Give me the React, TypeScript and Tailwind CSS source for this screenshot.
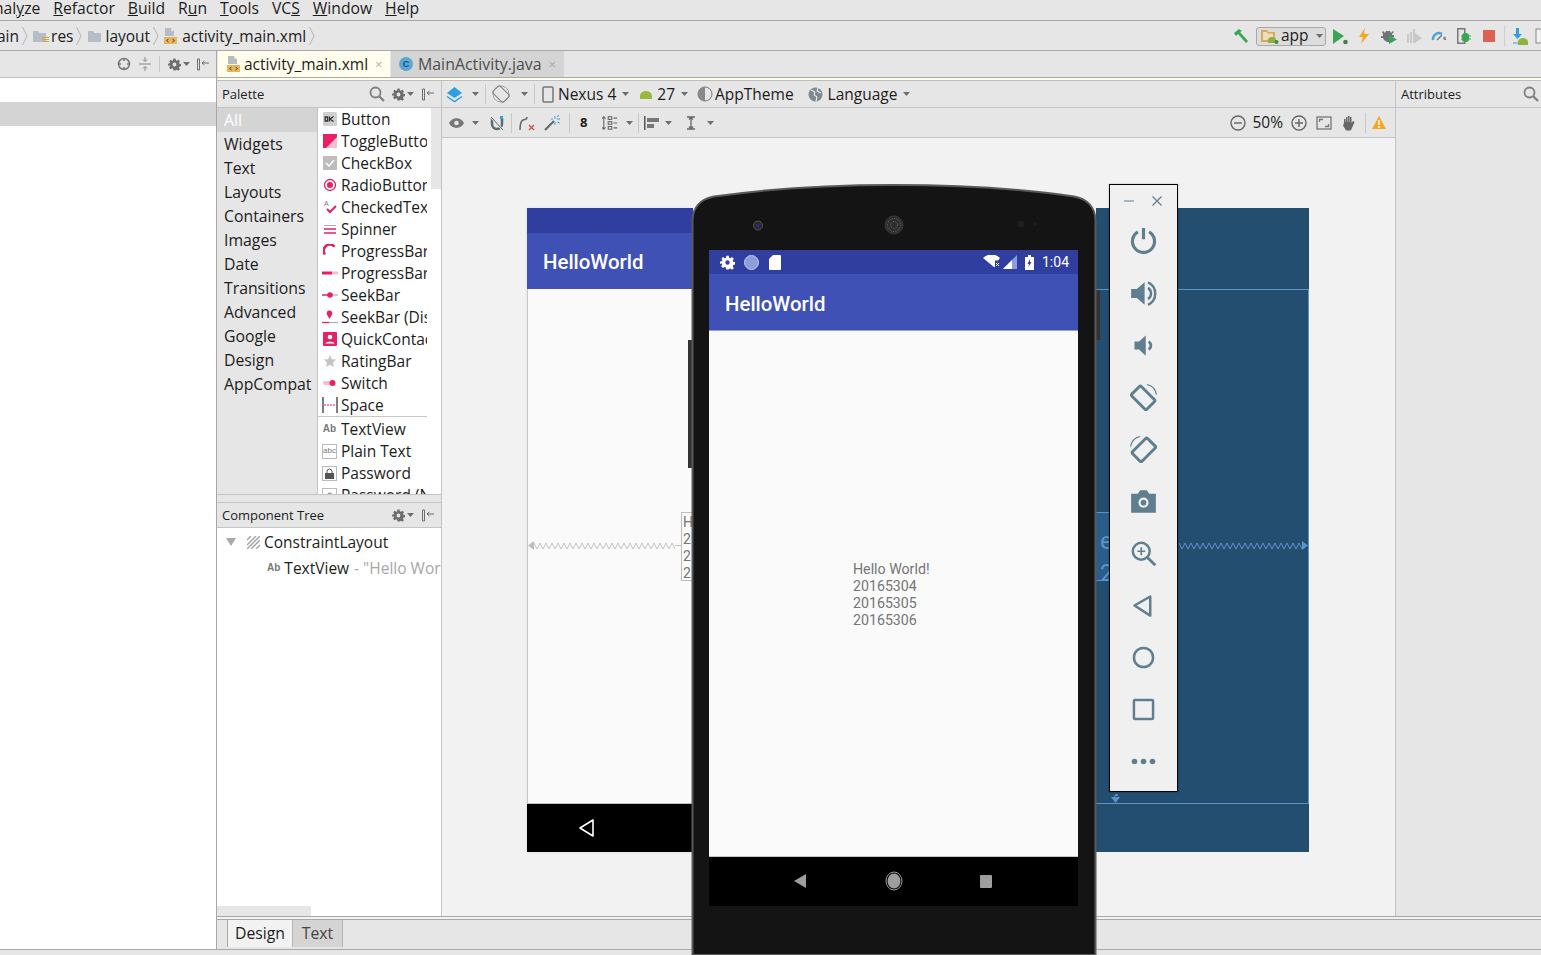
import React from 'react';

const Gear = () => (
  <span className="flex items-center">
    <svg width="13" height="13" viewBox="0 0 24 24" fill="#6e6e6e">
      <path fillRule="evenodd" d="M10 1h4l.6 3.2 2 .8L19.300 3.200l2.800 2.800-1.800 2.700.8 2 3.100.6v4l-3.100.6-.8 2 1.800 2.700-2.800 2.800-2.700-1.800-2 .8L14 23h-4l-.6-3.200-2-.8-2.700 1.800-2.800-2.800 1.800-2.700-.8-2L0 14.500v-4l3.100-.6.8-2L2.100 6l2.800-2.800L7.600 5l2-.8zM12 8.500a3.500 3.500 0 1 0 0 7 3.500 3.500 0 0 0 0-7z" />
    </svg>
    <Caret />
  </span>
);

const Caret = () => (
  <svg width="7" height="4" viewBox="0 0 7 4" className="ml-[2px]"><path d="M0 0h7L3.500 4z" fill="#6e6e6e" /></svg>
);

const PinLeft = () => (
  <svg width="13" height="13" viewBox="0 0 13 13" fill="none" stroke="#6e6e6e">
    <path d="M1.500 1v11M1.500 1h2v11h-2" />
    <path d="M6 5h7M6 5l2.500-2M6 5l2.500 2" />
  </svg>
);

const Search = () => (
  <svg width="16" height="16" viewBox="0 0 16 16" fill="none" stroke="#7f7f7f" strokeWidth="1.800">
    <circle cx="6.500" cy="6.500" r="5" />
    <path d="M10 10l5 5" strokeWidth="2.200" />
  </svg>
);

const XmlFile = () => (
  <svg width="14" height="16" viewBox="0 0 14 16">
    <path d="M1 0h6l3 3v5H1z" fill="#b5bcc2" />
    <path d="M7 0v3h3z" fill="#e6e6e6" />
    <rect x="0" y="9" width="13" height="7" fill="#e8b45c" />
    <path d="M4.500 11l-2 1.500 2 1.500M8.500 11l2 1.500-2 1.500" stroke="#5a4a20" fill="none" />
  </svg>
);

const Chevron = () => (
  <svg width="6" height="20" viewBox="0 0 6 20" fill="none" stroke="#b4b4b4"><path d="M.5 1l4.500 9-4.500 9" /></svg>
);

const Folder = ({ lines }: { lines?: boolean }) => (
  <svg width="16" height="13" viewBox="0 0 16 13">
    <path d="M0 1h5l1.500 2H13v9H0z" fill="#b5bec6" />
    {lines && <path d="M9 7.500h7M9 9.500h7M9 11.500h7" stroke="#d9a441" />}
  </svg>
);

const Sep = ({ h = 18 }: { h?: number }) => <div className="w-px bg-[#c8c8c8] mx-[6px]" style={{ height: h }} />;

const menu: [string, string, string][] = [
  ['nal', 'y', 'ze'],
  ['', 'R', 'efactor'],
  ['', 'B', 'uild'],
  ['R', 'u', 'n'],
  ['', 'T', 'ools'],
  ['VC', 'S', ''],
  ['', 'W', 'indow'],
  ['', 'H', 'elp'],
];

const categories = ['All', 'Widgets', 'Text', 'Layouts', 'Containers', 'Images', 'Date', 'Transitions', 'Advanced', 'Google', 'Design', 'AppCompat'];

const pink = '#e91e63';

const paletteIcons: Record<string, React.ReactNode> = {
  ok: (
    <svg width="14" height="14" viewBox="0 0 14 14"><rect width="14" height="14" rx="1.500" fill="#cfcfcf" /><path d="M2.200 5h2.400v4H2.200zM6.500 4.500V9.500M10.500 4.500L7 7l3.500 2.500" fill="none" stroke="#333" strokeWidth="1.300" /></svg>
  ),
  toggle: (
    <svg width="14" height="14" viewBox="0 0 14 14"><rect width="14" height="14" fill={pink} /><path d="M14 3v11H3z" fill="#f8bbd0" /></svg>
  ),
  check: (
    <svg width="14" height="14" viewBox="0 0 14 14"><rect width="14" height="14" fill="#bdbdbd" /><path d="M3 7l3 3 5-6" fill="none" stroke="#fff" strokeWidth="1.500" /></svg>
  ),
  radio: (
    <svg width="14" height="14" viewBox="0 0 14 14"><circle cx="7" cy="7" r="5.500" fill="none" stroke={pink} strokeWidth="1.300" /><circle cx="7" cy="7" r="3" fill={pink} /></svg>
  ),
  checked: (
    <svg width="14" height="14" viewBox="0 0 14 14"><text x="1" y="6" fontSize="7" fill="#777" fontFamily="Liberation Sans">A</text><path d="M4 9l3 3 6-6" fill="none" stroke={pink} strokeWidth="2" /></svg>
  ),
  spinner: (
    <svg width="14" height="14" viewBox="0 0 14 14"><path d="M1 7h12M1 11h12" stroke={pink} strokeWidth="1.600" /><path d="M1 3.500h12" stroke="#aaa" /></svg>
  ),
  circle: (
    <svg width="14" height="14" viewBox="0 0 14 14"><path d="M11.500 2.800A6 6 0 1 0 2 10.500" fill="none" stroke={pink} strokeWidth="2.600" /></svg>
  ),
  bar: (
    <svg width="16" height="14" viewBox="0 0 16 14"><rect y="5.500" width="10" height="3" fill={pink} /><rect x="10" y="5.500" width="6" height="3" fill="#f8bbd0" /></svg>
  ),
  seek: (
    <svg width="16" height="14" viewBox="0 0 16 14"><path d="M0 7h16" stroke="#aaa" strokeWidth="1.200" /><path d="M0 7h7" stroke={pink} strokeWidth="1.200" /><circle cx="8" cy="7" r="2.800" fill={pink} /></svg>
  ),
  seekd: (
    <svg width="16" height="16" viewBox="0 0 16 16"><path d="M0 13.500h16" stroke="#aaa" strokeWidth="1.200" /><path d="M0 13.500h7" stroke={pink} strokeWidth="1.200" /><path d="M7.500 10L5 5.500a2.800 2.800 0 1 1 5 0z" fill={pink} /></svg>
  ),
  quick: (
    <svg width="14" height="14" viewBox="0 0 14 14"><rect width="14" height="14" rx="1" fill={pink} /><circle cx="7" cy="5" r="2.300" fill="#fff" /><path d="M2.500 11.500c0-2.500 9-2.500 9 0z" fill="#fff" /></svg>
  ),
  star: (
    <svg width="14" height="14" viewBox="0 0 14 14"><path d="M7 1l1.800 4.200 4.500.4-3.400 3 1 4.400L7 10.700 3.100 13l1-4.400-3.400-3 4.500-.4z" fill="#c4c4c4" /></svg>
  ),
  sw: (
    <svg width="14" height="14" viewBox="0 0 14 14"><rect y="5" width="12" height="4" rx="2" fill="#f8bbd0" /><circle cx="9.500" cy="7" r="3" fill={pink} /></svg>
  ),
  space: (
    <svg width="16" height="16" viewBox="0 0 16 16"><path d="M1 0v16M15 0v16" stroke="#555" strokeWidth="1.500" /><path d="M2 8h12" stroke={pink} strokeWidth="1.200" strokeDasharray="2 1" /></svg>
  ),
  ab: <span className="text-[10px] leading-none text-[#777] font-['Liberation_Sans'] font-bold">Ab</span>,
  abc: (
    <span className="flex w-[15px] h-[15px] items-center justify-center border border-[#bbb] text-[8px] leading-none text-[#777] font-['Liberation_Sans']">abc</span>
  ),
  lock: (
    <span className="flex w-[15px] h-[15px] items-center justify-center border border-[#bbb]">
      <svg width="9" height="11" viewBox="0 0 9 11"><path d="M2 5V3.500a2.500 2.500 0 0 1 5 0V5" fill="none" stroke="#555" /><rect y="5" width="9" height="6" fill="#555" /></svg>
    </span>
  ),
  num: (
    <span className="flex w-[15px] h-[15px] items-center justify-center border border-[#bbb] text-[8px] leading-none text-[#777] font-['Liberation_Sans']">#</span>
  ),
};

const widgets: [string, string][] = [
  ['ok', 'Button'],
  ['toggle', 'ToggleButton'],
  ['check', 'CheckBox'],
  ['radio', 'RadioButton'],
  ['checked', 'CheckedTextView'],
  ['spinner', 'Spinner'],
  ['circle', 'ProgressBar'],
  ['bar', 'ProgressBar (Horizontal)'],
  ['seek', 'SeekBar'],
  ['seekd', 'SeekBar (Discrete)'],
  ['quick', 'QuickContactBadge'],
  ['star', 'RatingBar'],
  ['sw', 'Switch'],
  ['space', 'Space'],
];

const textItems: [string, string][] = [
  ['ab', 'TextView'],
  ['abc', 'Plain Text'],
  ['lock', 'Password'],
  ['num', 'Password (Numeric)'],
];

const PaletteRow = ({ icon, label }: { icon: string; label: string }) => (
  <div className="flex h-[22px] items-center shrink-0">
    <div className="flex w-[23px] justify-center shrink-0">{paletteIcons[icon]}</div>
    <span className="block w-[86px] overflow-hidden whitespace-nowrap pt-[2px]">{label}</span>
  </div>
);

const TopIcons = () => (
  <div className="flex items-center -mr-[10px]">
    {/* hammer */}
    <svg width="16" height="16" viewBox="0 0 16 16" className="mr-[7px]"><path d="M1 5l5-4 3 2-2 1 8 9-2 2-8-9-2 2z" fill="#3aa655" /></svg>
    <div className="flex items-center w-[70px] h-[19px] rounded-[3px] border border-[#a8a8a8] bg-[#dcdcdc] pl-[4px]">
      <svg width="18" height="15" viewBox="0 0 18 15"><path d="M0 1h6l1.500 2H14v10H0z" fill="#d9a85f" /><path d="M2 3v8h10V4.500H7L5.500 3z" fill="#f1dcb7" /><path d="M7 14v-3a4 3 0 0 1 8 0v3z" fill="#8cb33f" /><circle cx="15.500" cy="13" r="2" fill="#3d8b46" /></svg>
      <span className="ml-[2px] leading-none">app</span>
      <span className="ml-[5px]"><Caret /></span>
    </div>
    <div className="flex w-[25px] justify-end pr-[2px]"><svg width="17" height="17" viewBox="0 0 17 17"><path d="M1 1l11 7-11 8z" fill="#3aa655" /><circle cx="13.500" cy="14" r="2.300" fill="#4a7a50" /></svg></div>
    <div className="flex w-[25px] justify-center"><svg width="10" height="16" viewBox="0 0 10 16"><path d="M6 0L0 9h4l-2 7 8-10H5z" fill="#f5a623" /></svg></div>
    <div className="flex w-[25px] justify-center"><svg width="16" height="16" viewBox="0 0 16 16"><path d="M2 3l2 2 1-2h4l1 2 2-2 1 1-2 2v1h2v2h-2l-1 3-2-1v3H6l-3-2-1-2H0V8h2V6L1 4z" fill="#6e7478" /><path d="M8 7l8 4.500L8 16z" fill="#3aa655" /></svg></div>
    <div className="flex w-[25px] justify-center"><svg width="16" height="16" viewBox="0 0 16 16"><path d="M1 6h2v9H1zM4 4h2v11H4zM7 1h2v14H7z" fill="#c8c8c8" /><path d="M9 5l7 5-7 5z" fill="#c8c8c8" /></svg></div>
    <div className="flex w-[25px] justify-center"><svg width="16" height="14" viewBox="0 0 16 14" fill="none"><path d="M2 11a6 6 0 0 1 9-6" stroke="#4aa8d8" strokeWidth="2.500" /><path d="M13 8a6 6 0 0 1 1 3" stroke="#888" strokeWidth="2.500" /><path d="M6 11l5-5" stroke="#777" strokeWidth="1.500" /></svg></div>
    <div className="flex w-[25px] justify-center"><svg width="14" height="16" viewBox="0 0 14 16"><path d="M.75.750h7v14.500h-7z" fill="none" stroke="#777" strokeWidth="1.500" /><rect x="5" y="5" width="7" height="9" rx="3" fill="#3aa655" /><path d="M4 8h10M4 11h10" stroke="#3aa655" /></svg></div>
    <div className="flex w-[25px] justify-center"><div className="h-[12px] w-[12px] bg-[#dc6152]" /></div>
    <div className="w-px h-[22px] bg-[#cfcfcf] ml-[3px] mr-[6px]" />
    <div className="flex w-[20px] justify-center"><svg width="16" height="17" viewBox="0 0 16 17"><path d="M3 0h3v6h3L4.500 11 0 6h3z" fill="#2f9fe0" /><path d="M5 17v-3a5 4 0 0 1 10 0v3z" fill="#8cb33f" /><path d="M0 15h5" stroke="#2f9fe0" /></svg></div>
    <div className="flex w-[18px] justify-center ml-[2px]"><svg width="14" height="16" viewBox="0 0 14 16"><rect x="1" y="1" width="12" height="14" fill="#f0f0f0" stroke="#888" /></svg></div>
  </div>
);

const DesignToolbars = () => (
  <div className="flex flex-col flex-1 min-w-0">
    <div className="flex h-[27px] items-center border-b border-[#c4c4c4] pl-[4px] shrink-0">
      <svg width="17" height="17" viewBox="0 0 17 17"><path d="M8.500 1L16 7l-7.500 5L1 7z" fill="#2f9fe0" /><path d="M1 10.500l7.500 5 7.500-5" fill="none" stroke="#2f9fe0" strokeWidth="1.500" /></svg>
      <span className="ml-[7px]"><Caret /></span>
      <Sep h={20} />
      <svg width="18" height="18" viewBox="0 0 18 18" fill="none" stroke="#808080"><rect x="4" y="1.500" width="10" height="15" rx="1.500" transform="rotate(-45 9 9)" /><circle cx="9" cy="9" r="8" strokeWidth=".6" /></svg>
      <span className="ml-[9px]"><Caret /></span>
      <Sep h={20} />
      <svg width="12" height="17" viewBox="0 0 12 17" fill="none" stroke="#777" strokeWidth="1.500" className="ml-[1px]"><rect x="1" y="1" width="10" height="15" rx="1" /></svg>
      <span className="ml-[4px] pt-[2px]">Nexus 4</span>
      <span className="ml-[4px]"><Caret /></span>
      <svg width="14" height="9" viewBox="0 0 14 9" className="ml-[10px]"><path d="M1 9V6a6 5 0 0 1 12 0v3z" fill="#9ab83f" /></svg>
      <span className="ml-[4px] pt-[2px]">27</span>
      <span className="ml-[4px]"><Caret /></span>
      <svg width="16" height="16" viewBox="0 0 16 16" className="ml-[9px]"><circle cx="8" cy="8" r="7" fill="none" stroke="#777" /><path d="M8 1a7 7 0 0 0 0 14z" fill="#888" /></svg>
      <span className="ml-[2px] pt-[2px]">AppTheme</span>
      <svg width="15" height="15" viewBox="0 0 15 15" className="ml-[14px]"><circle cx="7.500" cy="7.500" r="7" fill="#7f8a91" /><path d="M3 3l4 2-1 3 3 2-1 4M10 1l-1 3 4 2" fill="none" stroke="#fff" /></svg>
      <span className="ml-[5px] pt-[2px]">Language</span>
      <span className="ml-[4px]"><Caret /></span>
    </div>
    <div className="flex h-[30px] items-center border-b border-[#c4c4c4] pl-[7px] pr-[9px] shrink-0">
      <svg width="15" height="10" viewBox="0 0 15 10"><path d="M0 5c3-6.500 12-6.500 15 0-3 6.500-12 6.500-15 0z" fill="#777" /><circle cx="7.500" cy="5" r="2.300" fill="#e6e6e6" /></svg>
      <span className="ml-[6px]"><Caret /></span>
      <svg width="16" height="16" viewBox="0 0 16 16" className="ml-[10px]" fill="none"><path d="M3 3v6a5 5 0 0 0 10 0V3" stroke="#5a6b75" strokeWidth="2.500" /><path d="M1 1l13 14" stroke="#e6e6e6" strokeWidth="2" /><path d="M2 2l12 13" stroke="#5a6b75" /><rect x="11" y="1" width="3" height="3" fill="#2f9fe0" /></svg>
      <Sep h={20} />
      <svg width="17" height="16" viewBox="0 0 17 16" fill="none"><path d="M2 15c0-7 1-9 3-10s4 0 4-3" stroke="#666" strokeWidth="1.500" /><path d="M11 10l5 5M16 10l-5 5" stroke="#c75450" strokeWidth="1.300" /></svg>
      <svg width="16" height="16" viewBox="0 0 16 16" className="ml-[9px]" fill="none"><path d="M1 15l9-9" stroke="#666" strokeWidth="2.200" /><path d="M11 1v3M11 7v3M7 4h2M13 4h3M13 1.500l2-1M13.500 7l2 1" stroke="#2f9fe0" /></svg>
      <div className="w-px h-[20px] bg-[#c8c8c8] ml-[9px] mr-[10px]" />
      <span className="text-[13px] font-bold leading-none">8</span>
      <svg width="16" height="16" viewBox="0 0 18 16" className="ml-[15px]" fill="none" stroke="#666" strokeWidth="1.200"><path d="M2 1v14M0 3l2-2 2 2M0 13l2 2 2-2" /><rect x="7" y="1" width="4" height="3" /><rect x="7" y="6.500" width="4" height="3" /><rect x="7" y="12" width="4" height="3" /><path d="M13 2.500h4M13 8h4M13 13.500h4" /></svg>
      <span className="ml-[6px]"><Caret /></span>
      <div className="w-px h-[20px] bg-[#c8c8c8] ml-[5px] mr-[5px]" />
      <svg width="16" height="14" viewBox="0 0 16 14"><path d="M.75 0v14" stroke="#555" strokeWidth="1.500" /><rect x="3" y="2" width="12" height="4" fill="#777" /><rect x="3" y="8" width="7" height="4" fill="#777" /></svg>
      <span className="ml-[3px]"><Caret /></span>
      <svg width="10" height="14" viewBox="0 0 10 14" className="ml-[14px]" fill="none" stroke="#666" strokeWidth="1.300"><path d="M1 1h8M1 13h8M5 1v12" /><path d="M3 3.500l2-2 2 2M3 10.500l2 2 2-2" /></svg>
      <span className="ml-[9px]"><Caret /></span>
      <div className="flex-1" />
      <svg width="16" height="16" viewBox="0 0 16 16" fill="none" stroke="#666" strokeWidth="1.400"><circle cx="8" cy="8" r="7" /><path d="M4 8h8" /></svg>
      <span className="ml-[6px]">50%</span>
      <svg width="16" height="16" viewBox="0 0 16 16" className="ml-[8px]" fill="none" stroke="#666" strokeWidth="1.400"><circle cx="8" cy="8" r="7" /><path d="M4 8h8M8 4v8" /></svg>
      <svg width="16" height="14" viewBox="0 0 16 14" className="ml-[9px]" fill="none" stroke="#777" strokeWidth="1.300"><rect x="1" y="1" width="14" height="12" /><path d="M3.500 6V3.500H7M12.500 8v2.500H9" /></svg>
      <svg width="16" height="16" viewBox="0 0 16 16" className="ml-[9px]"><path d="M3 8V4h1.500v3H5V2h1.500v5H7V1h1.500v6H9V2h1.500v6l1.500-2 1.500 1-3 7-1 1.500H5L2 10.500z" fill="#666" /></svg>
      <div className="w-px h-[20px] bg-[#c8c8c8] ml-[8px] mr-[6px]" />
      <svg width="14" height="13" viewBox="0 0 14 13"><path d="M7 0l7 13H0z" fill="#f5a623" /><path d="M7 4v5M7 10v2" stroke="#fff" strokeWidth="1.500" /></svg>
    </div>
  </div>
);

const Zigzag = ({ width, color }: { width: number; color: string }) => {
  const pts: string[] = [];
  for (let x = 0; x <= width; x += 3) pts.push(`${x},${(x / 3) % 2 === 0 ? 1 : 7}`);
  return (
    <svg width={width} height="8" viewBox={`0 0 ${width} 8`} fill="none">
      <polyline points={pts.join(' ')} stroke={color} />
    </svg>
  );
};

const emuIcons: React.ReactNode[] = [
  <path key="p" d="M12 0v10M7 3.500a9.800 9.800 0 1 0 10 0" fill="none" strokeWidth="2.800" />,
  <g key="vu"><path d="M1 8h5l7-6v20l-7-6H1z" fill="#5f7f8f" stroke="none" /><path d="M16 7a6 6 0 0 1 0 10M16 2a11 11 0 0 1 0 20" fill="none" strokeWidth="2.200" /></g>,
  <g key="vd"><path d="M4 8.500h4l6-5.500v18l-6-5.500H4z" fill="#5f7f8f" stroke="none" /><path d="M16.500 8.500a4 4 0 0 1 0 7" fill="none" strokeWidth="2.400" /></g>,
  <g key="rl" fill="none" strokeWidth="2.600"><rect x="6" y="3.500" width="12" height="19" rx="1.500" transform="rotate(-45 11 13)" /><path d="M15 .5a11 11 0 0 1 8.500 9" strokeWidth="1" /></g>,
  <g key="rr" fill="none" strokeWidth="2.600"><rect x="6" y="3.500" width="12" height="19" rx="1.500" transform="rotate(45 13 13)" /><path d="M9 .5a11 11 0 0 0-8.500 9" strokeWidth="1" /></g>,
  <g key="c"><path d="M1 5h6l2-3h6l2 3h6v17H1z" fill="#5f7f8f" stroke="none" /><circle cx="12" cy="13" r="4.500" fill="#f0f0f0" stroke="none" /><circle cx="12" cy="13" r="2.500" fill="#5f7f8f" stroke="none" /></g>,
  <g key="z" fill="none" strokeWidth="2.200"><circle cx="10" cy="10" r="7.500" /><path d="M15.500 15.500l7 7" strokeWidth="2.500" /><path d="M10 6.500v7M6.500 10h7" strokeWidth="1.500" /></g>,
  <path key="b" d="M4 12l14-8v17z" fill="none" strokeWidth="2.200" strokeLinejoin="round" />,
  <circle key="h" cx="12" cy="12" r="8.500" fill="none" strokeWidth="2.200" />,
  <rect key="r" x="3.500" y="3.500" width="17" height="17" rx="1" fill="none" strokeWidth="2.200" />,
  <g key="m" stroke="none" fill="#5f7f8f"><circle cx="4" cy="12" r="2.500" /><circle cx="12" cy="12" r="2.500" /><circle cx="20" cy="12" r="2.500" /></g>,
];

export default function App() {
  return (
    <div className="relative flex h-[955px] w-[1541px] flex-col overflow-hidden bg-[#e6e6e6] font-['Open_Sans','Noto_Sans_CJK_SC',sans-serif] text-[15.5px] text-[#1c1c1c]">
      {/* Menu bar */}
      <div className="flex h-[21px] shrink-0 items-center gap-[13px] border-b border-[#a8a8a8] -ml-[6px] pb-[3px] text-[15.7px]">
        {menu.map(([a, u, b]) => (
          <span key={a + u + b} className="whitespace-nowrap leading-none">{a}<u>{u}</u>{b}</span>
        ))}
      </div>

      {/* Breadcrumb + run toolbar */}
      <div className="flex h-[30px] shrink-0 items-center justify-between border-b border-[#a8a8a8] pt-[1px]">
        <div className="flex items-center -ml-[3px]">
          <span className="pt-[2px]">ain</span>
          <span className="ml-[3px]"><Chevron /></span>
          <span className="ml-[5px]"><Folder lines /></span>
          <span className="ml-[2px] pt-[2px]">res</span>
          <span className="ml-[3px]"><Chevron /></span>
          <span className="ml-[6px]"><Folder /></span>
          <span className="ml-[1px] pt-[2px]">layout</span>
          <span className="ml-[3px]"><Chevron /></span>
          <span className="ml-[5px]"><XmlFile /></span>
          <span className="ml-[4px] pt-[2px]">activity_main.xml</span>
          <span className="ml-[3px]"><Chevron /></span>
        </div>
        <TopIcons />
      </div>

      <div className="flex min-h-0 flex-1">
        {/* Project panel */}
        <div className="flex w-[217px] shrink-0 flex-col border-r border-[#a8a8a8]">
          <div className="flex h-[27px] shrink-0 items-center justify-end gap-[8px] border-b border-[#c4c4c4] pr-[7px]">
            <svg width="14" height="14" viewBox="0 0 14 14" fill="none" stroke="#777" strokeWidth="1.500"><circle cx="7" cy="7" r="5.500" /><path d="M7 1v3M7 10v3M1 7h3M10 7h3" /></svg>
            <svg width="12" height="14" viewBox="0 0 12 14" fill="none" stroke="#888"><path d="M0 7h12M6 0v4M4 2.500l2 2 2-2M6 14v-4M4 11.500l2-2 2 2" /></svg>
            <div className="h-[16px] w-px bg-[#c8c8c8]" />
            <Gear />
            <span className="-ml-[2px]"><PinLeft /></span>
          </div>
          <div className="flex-1 bg-white pt-[24px]">
            <div className="h-[24px] bg-[#d4d4d4]" />
          </div>
        </div>

        {/* Editor area */}
        <div className="flex min-w-0 flex-1 flex-col">
          {/* Tabs */}
          <div className="flex h-[27px] shrink-0 border-b border-[#a8a8a8] pl-[1px]">
            <div className="flex w-[172px] items-center gap-[3px] bg-[#fffdeb] pl-[9px]">
              <XmlFile />
              <span className="pt-[2px] leading-none">activity_main.xml</span>
              <span className="ml-[4px] text-[13px] leading-none text-[#b0b0b0]">×</span>
            </div>
            <div className="ml-px flex w-[173px] items-center gap-[5px] bg-[#d4d4d4] pl-[8px] text-[15.9px] text-[#4d4d4d]">
              <span className="flex h-[14px] w-[14px] items-center justify-center rounded-full bg-[#59a9d6] font-['Liberation_Sans'] text-[9px] font-bold leading-none text-[#1f4f6b]">C</span>
              <span className="pt-[2px] leading-none">MainActivity.java</span>
              <span className="ml-[2px] text-[13px] leading-none text-[#a8a8a8]">×</span>
            </div>
          </div>
          <div className="h-[3px] shrink-0 border-b border-[#bdbdbd] bg-[#fffdeb]" />

          <div className="flex min-h-0 flex-1 flex-col">
            <div className="flex min-h-0 flex-1">
              {/* Palette + component tree */}
              <div className="flex w-[225px] shrink-0 flex-col border-r border-[#c4c4c4]">
                <div className="flex h-[27px] shrink-0 items-center border-b border-[#c4c4c4] pl-[5px] pr-[7px]">
                  <span className="text-[13px] leading-none">Palette</span>
                  <div className="flex-1" />
                  <Search />
                  <span className="ml-[7px]"><Gear /></span>
                  <span className="ml-[7px]"><PinLeft /></span>
                </div>
                <div className="flex h-[386px] shrink-0">
                  <div className="flex w-[101px] shrink-0 flex-col border-r border-[#c4c4c4] text-[15.8px]">
                    {categories.map((c, i) => (
                      <div key={c} className={`flex h-[24px] shrink-0 items-center pl-[7px] pt-[2px] ${i === 0 ? 'bg-[#d4d4d4] text-white' : ''}`}>{c}</div>
                    ))}
                  </div>
                  <div className="relative flex flex-1 flex-col overflow-hidden bg-white">
                    {widgets.map(([ic, l]) => <PaletteRow key={l} icon={ic} label={l} />)}
                    <div className="mb-px h-px w-[109px] shrink-0 bg-[#c8c8c8]" />
                    {textItems.map(([ic, l]) => <PaletteRow key={l} icon={ic} label={l} />)}
                    <div className="absolute right-0 top-0 h-[81px] w-[10px] bg-[#e6e6e6]" />
                  </div>
                </div>
                <div className="h-[9px] shrink-0 border-y border-[#c4c4c4]" />
                <div className="flex h-[25px] shrink-0 items-center border-b border-[#c4c4c4] pl-[5px] pr-[7px]">
                  <span className="text-[13px] leading-none">Component Tree</span>
                  <div className="flex-1" />
                  <Gear />
                  <span className="ml-[7px]"><PinLeft /></span>
                </div>
                <div className="flex min-h-0 flex-1 flex-col overflow-hidden bg-white">
                  <div className="flex h-[28px] shrink-0 items-center pl-[9px]">
                    <svg width="10" height="8" viewBox="0 0 10 8"><path d="M0 0h10L5 8z" fill="#a8a8a8" /></svg>
                    <svg width="13" height="13" viewBox="0 0 13 13" className="ml-[11px]" stroke="#a0a0a0" fill="none"><path d="M0 4l4-4M0 9l9-9M0 13L13 0M4 13l9-9M9 13l4-4" strokeWidth="1.300" /></svg>
                    <span className="ml-[4px] pt-[2px]">ConstraintLayout</span>
                  </div>
                  <div className="flex h-[24px] shrink-0 items-center whitespace-nowrap pl-[50px]">
                    <span className="font-['Liberation_Sans'] text-[10px] font-bold leading-none text-[#777]">Ab</span>
                    <span className="ml-[4px] pt-[2px]">TextView</span>
                    <span className="ml-[5px] pt-[2px] text-[#a6a6a6]">- "Hello World!</span>
                  </div>
                  <div className="flex-1" />
                  <div className="h-[10px] w-[94px] shrink-0 bg-[#e6e6e6]" />
                </div>
              </div>

              {/* Design surface */}
              <div className="flex min-w-0 flex-1 flex-col">
                <div className="flex flex-1 flex-col">
                  <DesignToolbars />
                  <div className="h-[778px] shrink-0 bg-[#f2f2f2]" />
                </div>
              </div>

              {/* Attributes */}
              <div className="flex w-[146px] shrink-0 flex-col border-l border-[#c4c4c4]">
                <div className="flex h-[27px] shrink-0 items-center justify-between border-b border-[#c4c4c4] pl-[5px] pr-[2px]">
                  <span className="text-[13px] leading-none">Attributes</span>
                  <Search />
                </div>
              </div>
            </div>

            {/* Bottom tabs */}
            <div className="h-[4px] shrink-0 border-y border-[#a8a8a8] bg-[#f2f2f2]" />
            <div className="flex h-[29px] shrink-0 pl-[10px] pb-[2px] text-[15.8px]">
              <div className="flex w-[65px] items-center justify-center border-l border-[#a8a8a8] bg-[#f2f2f2]">Design</div>
              <div className="flex w-[51px] items-center justify-center border-x border-[#b4b4b4] bg-[#d4d4d4] text-[#444]">Text</div>
            </div>
          </div>
        </div>
      </div>
      <div className="h-[6px] shrink-0 border-t border-[#a8a8a8]" />

      {/* Layout preview */}
      <div className="absolute left-[527px] top-[208px] flex h-[644px] w-[166px] flex-col shadow-[0_0_3px_#e0e0e0]">
        <div className="h-[25px] shrink-0 bg-[#303f9f]" />
        <div className="flex h-[56px] shrink-0 items-center bg-[#3f51b5] pl-[16px] pt-[2px] font-['Roboto'] text-[20.4px] font-medium text-white">HelloWorld</div>
        <div className="relative flex-1 border-b border-[#bdbdbd] border-l border-l-[#c8c8c8] bg-[#fafafa]">
          <div className="absolute left-0 top-[252px] flex items-center">
            <svg width="6" height="9" viewBox="0 0 6 9"><path d="M6 0v9L0 4.500z" fill="#bdbdbd" /></svg>
            <Zigzag width={141} color="#c4c4c4" />
            <div className="h-px w-[6px] bg-[#c4c4c4]" />
          </div>
          <div className="absolute left-[153px] top-[223px] flex h-[69px] w-[12px] flex-col overflow-hidden border border-[#bdbdbd] pl-px pt-px font-['Roboto'] text-[14px] leading-[17px] text-[#757575]">
            <span>H</span><span>2</span><span>2</span><span>2</span>
          </div>
        </div>
        <div className="flex h-[48px] shrink-0 items-center bg-black pl-[52px]">
          <svg width="16" height="18" viewBox="0 0 16 18"><path d="M1 9l13-8v16z" fill="none" stroke="#fff" strokeWidth="1.600" strokeLinejoin="round" /></svg>
        </div>
      </div>

      {/* Blueprint */}
      <div className="absolute left-[1096px] top-[208px] h-[644px] w-[213px] bg-[#234e6f]">
        <div className="absolute left-0 right-0 top-[81px] h-px bg-[#5b94c9]" />
        <div className="absolute left-0 right-0 top-[595px] h-px bg-[#5b94c9]" />
        <div className="absolute bottom-[48px] right-0 top-[81px] w-px bg-[#5b94c9]" />
        <div className="absolute left-0 top-[304px] flex h-[69px] w-[14px] flex-col overflow-hidden border-y border-[#5b94c9] bg-[#2a5d8a] pl-[4px] pt-[12px] font-['Roboto'] text-[24px] leading-[32px] text-[#5b94c9]">
          <span>e</span>
          <span>2</span>
        </div>
        <div className="absolute left-[83px] top-[333px] flex items-center">
          <Zigzag width={123} color="#5b94c9" />
          <svg width="6" height="9" viewBox="0 0 6 9"><path d="M0 0v9l6-4.500z" fill="#5b94c9" /></svg>
        </div>
        <svg width="9" height="10" viewBox="0 0 9 10" className="absolute left-[15px] top-[585px]"><path d="M0 4h9L4.500 10z" fill="#5b94c9" /><path d="M3 3l4-1-3-1" stroke="#5b94c9" fill="none" /></svg>
      </div>

      {/* Emulator */}
      <div className="absolute left-[688px] top-[184px] h-[771px] w-[412px]">
        <svg width="412" height="771" viewBox="0 0 412 771" className="absolute inset-0">
          <rect x="0" y="156" width="6" height="128" fill="#333" />
          <rect x="405" y="106" width="7" height="50" fill="#333" />
          <path d="M4.500 771V36C5 24 12 15 26 12.500 100 2 160 1 206 1s110 1 180 11.500c14 2.500 21 11.500 21.500 23.500V771z" fill="#141414" stroke="#5a5a5a" strokeWidth="2" />
          <circle cx="70" cy="41.500" r="4.500" fill="#2a2a2a" stroke="#555" />
          <circle cx="70" cy="41.500" r="2" fill="#2a2a7a" />
          <circle cx="206" cy="41" r="9" fill="#2e2e2e" stroke="#3a3a3a" />
          <circle cx="206" cy="41" r="6.500" fill="none" stroke="#707070" strokeDasharray="1 1.500" />
          <circle cx="206" cy="41" r="3.500" fill="none" stroke="#707070" strokeDasharray="1 1.500" />
          <circle cx="333" cy="40" r="3.500" fill="#1e1e1e" />
          <circle cx="347" cy="40" r="1.500" fill="#1e1e1e" />
        </svg>
        <div className="absolute left-[21px] top-[66px] flex h-[656px] w-[369px] flex-col">
          <div className="flex h-[24px] shrink-0 items-center bg-[#303f9f] pl-[11px] pr-[9px]">
            <svg width="15" height="15" viewBox="0 0 24 24" fill="#fff"><path fillRule="evenodd" d="M10 1h4l.6 3.200 2 .8L19.300 3.200l2.800 2.800-1.800 2.700.8 2 3.100.6v4l-3.100.6-.8 2 1.800 2.700-2.800 2.800-2.700-1.800-2 .8L14 23h-4l-.6-3.200-2-.8-2.700 1.800-2.800-2.800 1.800-2.700-.8-2L0 14.500v-4l3.100-.6.8-2L2.100 6l2.800-2.800L7.600 5l2-.8zM12 8.500a3.500 3.500 0 1 0 0 7 3.500 3.500 0 0 0 0-7z" /></svg>
            <div className="ml-[9px] h-[15px] w-[15px] rounded-full border border-[#c5cae9] bg-[#8c9eda]" />
            <svg width="12" height="15" viewBox="0 0 12 15" className="ml-[10px]"><path d="M4 0h7a1 1 0 0 1 1 1v13a1 1 0 0 1-1 1H1a1 1 0 0 1-1-1V4z" fill="#fff" /></svg>
            <div className="flex-1" />
            <svg width="17" height="14" viewBox="0 0 17 14"><path d="M0 3a12 12 0 0 1 17 0l-2 2.500h-3V11l-.5 1.500z" fill="#fff" /><path d="M13 8l3 3M16 8l-3 3" stroke="#fff" /></svg>
            <svg width="14" height="14" viewBox="0 0 14 14" className="ml-[3px]"><path d="M14 0v14H0z" fill="#8c9eda" /><path d="M9 5v9H0z" fill="#fff" /></svg>
            <svg width="9" height="15" viewBox="0 0 9 15" className="ml-[8px]"><path d="M3 0h3v2h3v13H0V2h3z" fill="#fff" /><path d="M5 4L2.500 9H4l-.5 3L6.500 7H5z" fill="#303f9f" /></svg>
            <span className="ml-[8px] font-['Roboto'] text-[14px] leading-none text-white">1:04</span>
          </div>
          <div className="flex h-[57px] shrink-0 items-center border-b border-[#9aa0c8] bg-[#3f51b5] pl-[16px] pt-[4px] font-['Roboto'] text-[20.4px] font-medium text-white">HelloWorld</div>
          <div className="flex flex-1 flex-col justify-center border-b border-[#c8c8c8] bg-[#fafafa] pl-[144px] pt-[2px] font-['Roboto'] text-[14.2px] leading-[17px] text-[#757575]">
            <span>Hello World!</span>
            <span>20165304</span>
            <span>20165305</span>
            <span>20165306</span>
          </div>
          <div className="flex h-[49px] shrink-0 items-center bg-black pb-[1px] pl-[85px]">
            <svg width="12" height="14" viewBox="0 0 12 14"><path d="M12 0v14L0 7z" fill="#9e9e9e" /></svg>
            <svg width="18" height="20" viewBox="0 0 18 20" className="ml-[79px]"><ellipse cx="9" cy="10" rx="8" ry="9" fill="none" stroke="#9e9e9e" /><ellipse cx="9" cy="10" rx="6.500" ry="7.500" fill="#9e9e9e" /></svg>
            <div className="ml-[77px] h-[13px] w-[12px] rounded-[1px] bg-[#9e9e9e]" />
          </div>
        </div>
      </div>

      {/* Emulator tool window */}
      <div className="absolute left-[1109px] top-[184px] flex h-[608px] w-[69px] flex-col items-center border border-black bg-[#f0f0f0] shadow-[0_0_2px_#00000040]">
        <div className="flex h-[30px] w-full shrink-0 items-center justify-between pl-[14px] pr-[15px] pt-[2px]">
          <svg width="10" height="10" viewBox="0 0 10 10"><path d="M0 5h10" stroke="#5f7f8f" /></svg>
          <svg width="10" height="10" viewBox="0 0 10 10"><path d="M.5.5l9 9M9.500.5l-9 9" stroke="#5f7f8f" strokeWidth="1.200" /></svg>
        </div>
        {emuIcons.map((ic, i) => (
          <div key={i} className="flex h-[52px] shrink-0 items-center justify-center">
            <svg width="27" height="27" viewBox="0 0 24 24" stroke="#5f7f8f">{ic}</svg>
          </div>
        ))}
      </div>
    </div>
  );
}
